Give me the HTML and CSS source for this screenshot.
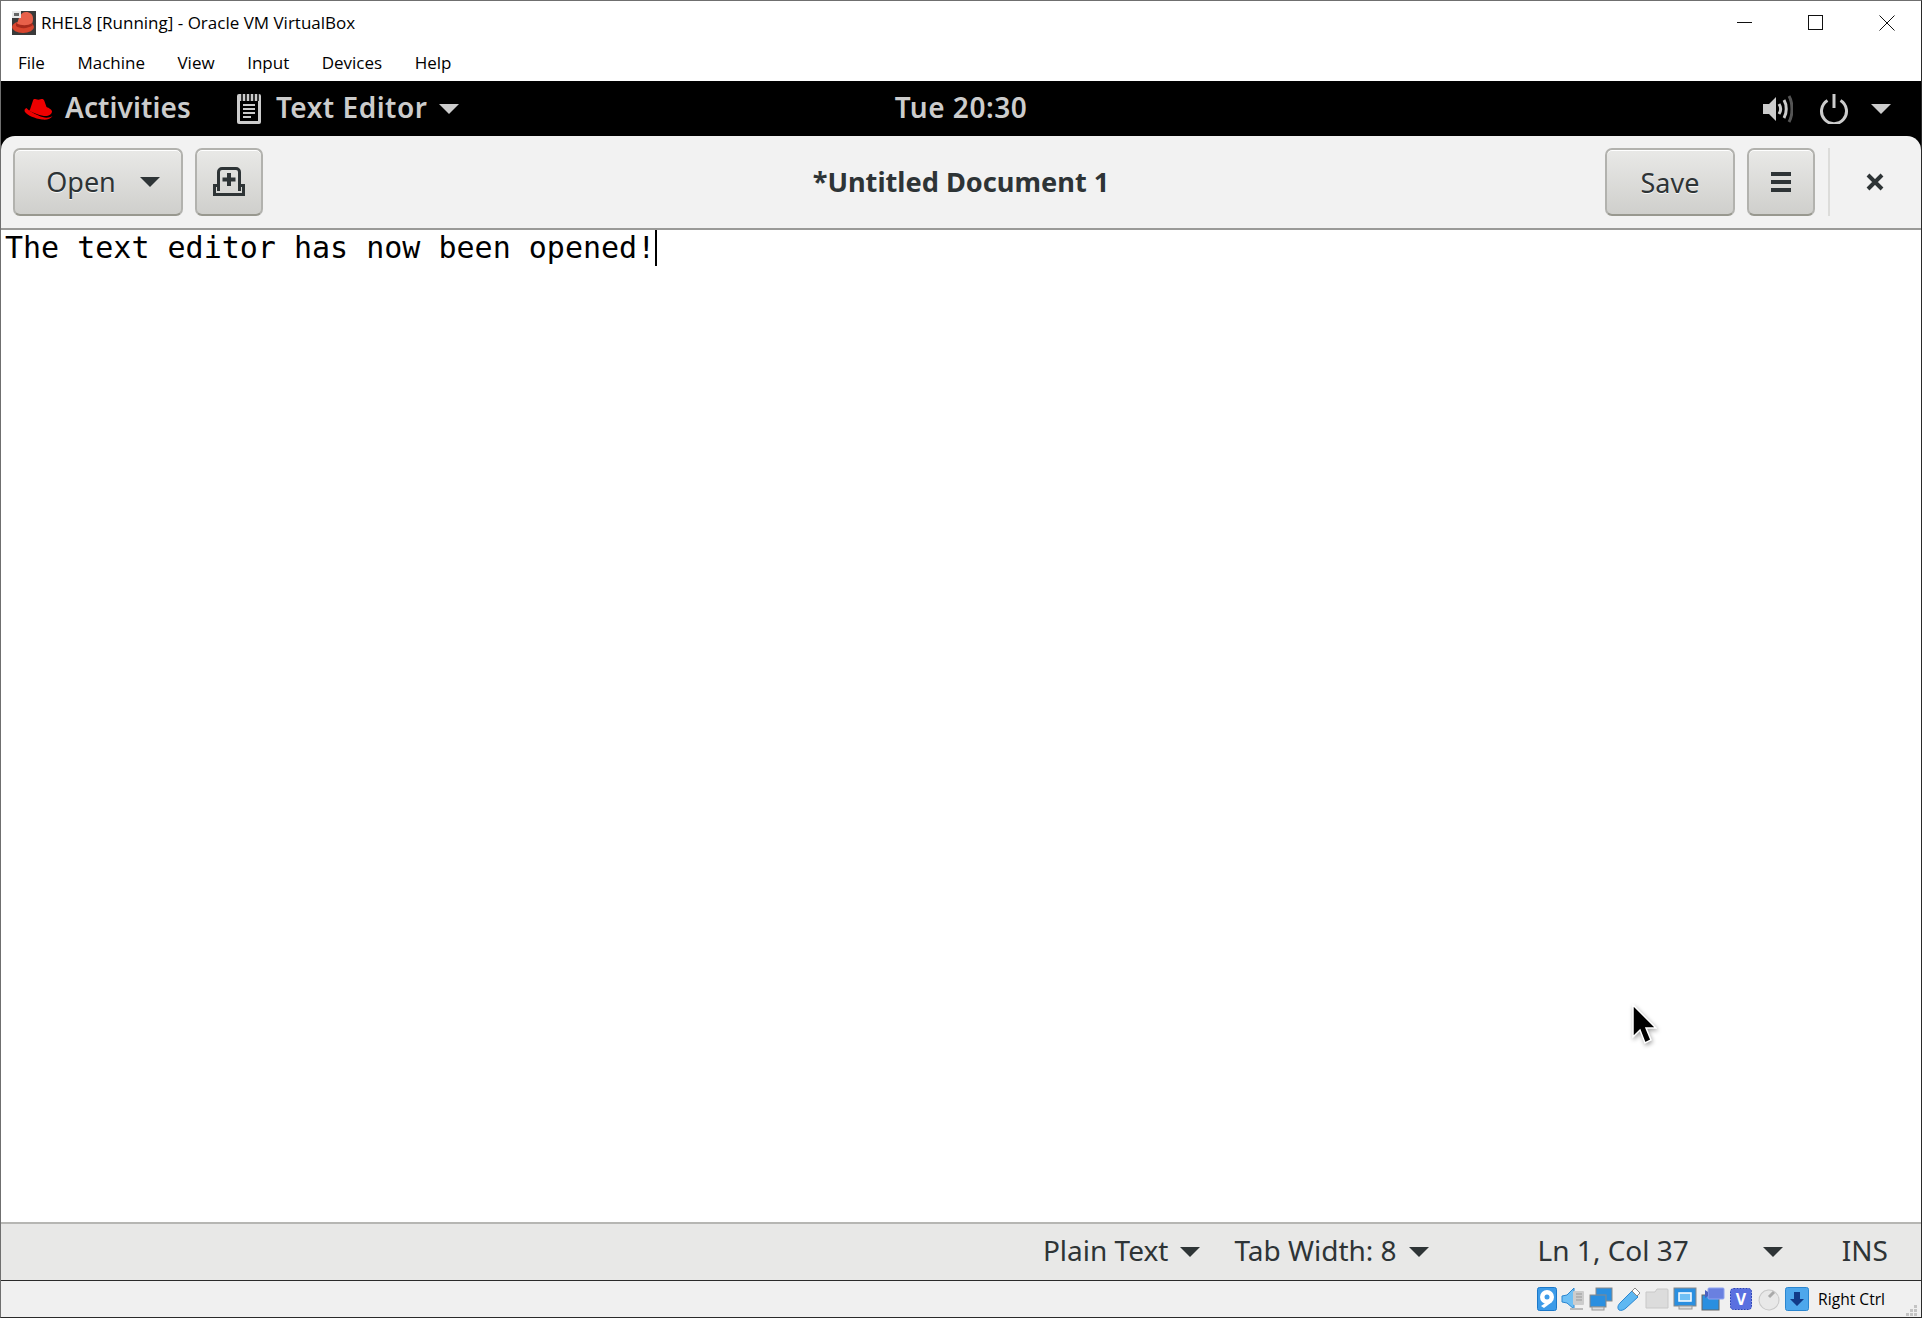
FILE: index.html
```html
<!DOCTYPE html>
<html lang="en">
<head>
<meta charset="utf-8">
<title>RHEL8 [Running] - Oracle VM VirtualBox</title>
<link rel="stylesheet" href="styles.css">
</head>
<body>
<div class="window">
  <div class="titlebar">
    <svg class="app-icon" viewBox="0 0 24 24" width="24" height="24">
      <rect width="24" height="24" fill="#3a3a3a"/>
      <ellipse cx="11" cy="16" rx="11" ry="6" fill="#d8452e"/>
      <path d="M5 14C6 9 8 1 14 1c4 0 7 2 7 7 0 3-1 5-2 6-4 2-10 2-14 0z" fill="#e8604a"/>
      <path d="M4 12c5 3 12 3 16 0l1 2c-5 4-13 4-17 1z" fill="#a82a1c"/>
      <rect width="9" height="7" fill="#e8e8e8"/>
      <rect x="2" y="2" width="5" height="3" fill="#666"/>
    </svg>
    <span class="title-text">RHEL8 [Running] - Oracle VM VirtualBox</span>
    <div class="win-controls">
      <svg viewBox="0 0 16 16" width="16" height="16"><path d="M0 7.500h15" stroke="#111" fill="none"/></svg>
      <svg viewBox="0 0 16 16" width="16" height="16"><rect x=".5" y=".5" width="14" height="14" stroke="#111" fill="none"/></svg>
      <svg viewBox="0 0 16 16" width="16" height="16"><path d="M.5.5l15 15M15.500.5l-15 15" stroke="#111" fill="none"/></svg>
    </div>
  </div>
  <div class="menubar">
    <span class="menu-item">File</span>
    <span class="menu-item">Machine</span>
    <span class="menu-item">View</span>
    <span class="menu-item">Input</span>
    <span class="menu-item">Devices</span>
    <span class="menu-item">Help</span>
  </div>
  <div class="panel">
    <div class="panel-left">
      <svg class="redhat" viewBox="0 0 30 24" width="30" height="24">
        <path d="M6 12.500l3-9c.4-1.300 1.600-1.700 3-1.200 1.400.5 3 .7 4.500 0 1.700-.8 3.200-.4 3.700 1.200l2.300 6.500c2.500 1 5.500 2.700 5.500 4.500 0 2.500-3.500 5-8 4.500C14 17.800 8 15.500 5 13.500z" fill="#e00"/>
        <path d="M2.500 11c-2 1-2.500 2.500-1.500 4 2.500 3.500 10 6.500 17 7.500 4.500.6 9-.5 10.500-3.500-4 2.500-9 2-14-.5C9 16 4.500 13.500 2.500 11z" fill="#e00"/>
      </svg>
      <span class="panel-text activities">Activities</span>
      <svg class="editor-icon" viewBox="0 0 26 32" width="26" height="32">
        <path d="M3 1h20a2 2 0 0 1 2 2v26a2 2 0 0 1-2 2H3a2 2 0 0 1-2-2V3a2 2 0 0 1 2-2z" fill="#ccc"/>
        <rect x="4" y="8" width="18" height="20" fill="#000"/>
        <path d="M6 1v7M10 1v7M14 1v7M18 1v7M22 1v7" stroke="#000" stroke-width="1.500"/>
        <path d="M7 12h12M7 16h12M7 20h12M7 24h8" stroke="#ccc" stroke-width="2"/>
      </svg>
      <span class="panel-text wide">Text Editor</span>
      <span class="caret caret-panel"></span>
    </div>
    <div class="panel-clock panel-text wide">Tue 20:30</div>
    <div class="panel-right">
      <svg viewBox="0 0 30 28" width="30" height="28">
        <path d="M0 9h6l7-7v24l-7-7H0z" fill="#ccc"/>
        <path d="M16 9c2 3 2 7 0 10" stroke="#ccc" stroke-width="3" fill="none"/>
        <path d="M21 5c3 5 3 13 0 18" stroke="#ccc" stroke-width="3" fill="none"/>
        <path d="M26 1c4 7 4 19 0 26" stroke="#555" stroke-width="3" fill="none"/>
      </svg>
      <svg class="power" viewBox="0 0 30 30" width="30" height="30">
        <path d="M8.500 6.500a12.500 12.500 0 1 0 13 0" stroke="#ccc" stroke-width="3" fill="none"/>
        <path d="M15 0v14" stroke="#ccc" stroke-width="3"/>
      </svg>
      <span class="caret caret-panel"></span>
    </div>
  </div>
  <div class="header">
    <div class="header-start">
      <button class="btn btn-open"><span class="btn-label">Open</span><span class="caret caret-dark"></span></button>
      <button class="btn btn-icon">
        <svg viewBox="0 0 32 30" width="32" height="30">
          <path d="M5.500 24V5a3.500 3.500 0 0 1 3.500-3.500h14A3.500 3.500 0 0 1 26.500 5v19" stroke="#2e3436" stroke-width="3" fill="none"/>
          <path d="M1.500 18v9.500h29V18" stroke="#2e3436" stroke-width="3" fill="none"/>
          <path d="M0 18.500h6M26 18.500h6" stroke="#2e3436" stroke-width="3"/>
          <path d="M16 6v13M9.500 12.500h13" stroke="#2e3436" stroke-width="4"/>
        </svg>
      </button>
    </div>
    <div class="doc-title">*Untitled Document 1</div>
    <div class="header-end">
      <button class="btn btn-save">Save</button>
      <button class="btn btn-icon">
        <svg viewBox="0 0 20 20" width="20" height="20"><path d="M0 2h20M0 10h20M0 18h20" stroke="#2e3436" stroke-width="4"/></svg>
      </button>
      <div class="separator"></div>
      <svg class="close" viewBox="0 0 18 18" width="18" height="18"><path d="M2 2l14 14M16 2L2 16" stroke="#2e3436" stroke-width="4"/></svg>
    </div>
  </div>
  <div class="editor">
    <span>The text editor has now been opened!</span><span class="cursor-bar"></span>
    <svg class="pointer" viewBox="0 0 26 42" width="26" height="42">
      <path d="M2 1v32l7-7 5 13 6-3-5-12h10z" fill="#000" stroke="#fff" stroke-width="1.500"/>
    </svg>
  </div>
  <div class="statusbar">
    <span class="status-item">Plain Text</span><span class="caret caret-dark status-caret"></span>
    <span class="status-item tab-width">Tab Width: 8</span><span class="caret caret-dark status-caret"></span>
    <span class="status-item pos">Ln 1, Col 37</span><span class="caret caret-dark pos-caret"></span>
    <span class="status-item ins">INS</span>
  </div>
  <div class="vbox-bar">
    <svg viewBox="0 0 20 24" width="20" height="24"><rect x=".5" y=".5" width="19" height="23" rx="2" fill="#3d9be8" stroke="#1b78c9"/><circle cx="10" cy="10" r="7" fill="#fff"/><circle cx="10" cy="10" r="2.500" fill="#3d9be8"/><path d="M4 19l9-6 2 2-8 6z" fill="#fff"/></svg>
    <svg viewBox="0 0 24 24" width="24" height="24"><path d="M1 9l5-1 7-7v21l-7-6-5-1z" fill="#6fc0f5" stroke="#2a86d0"/><rect x="12" y="4" width="11" height="14" rx="1" fill="#ccc"/><path d="M15 7h6M15 10h6M15 13h6" stroke="#999"/><path d="M9 22h13" stroke="#bbb" stroke-width="2"/></svg>
    <svg viewBox="0 0 24 24" width="24" height="24"><rect x="7" y="1" width="16" height="13" fill="#2a8fe0" stroke="#888"/><rect x="1" y="8" width="16" height="12" fill="#2a8fe0" stroke="#888"/><rect x="3" y="20" width="12" height="3" fill="#ddd" stroke="#999"/></svg>
    <svg viewBox="0 0 24 24" width="24" height="24"><path d="M2 23c-2-2-1-5 1-7L15 4l6 6L9 21c-2 2-5 3-7 2z" fill="#5fb8f2" stroke="#2a86d0"/><path d="M15 4l3-3 5 5-3 3z" fill="#fff" stroke="#888"/></svg>
    <svg viewBox="0 0 24 24" width="24" height="24"><path d="M1 5h9l2-3h10a1 1 0 0 1 1 1v18H1z" fill="#dcdcdc" stroke="#c8c8c8"/></svg>
    <svg viewBox="0 0 24 24" width="24" height="24"><rect x="1" y="1" width="22" height="18" fill="#2a8fe0" stroke="#888"/><rect x="6" y="6" width="12" height="8" fill="#6fc0f5" stroke="#fff" stroke-width="1.500"/><rect x="6" y="19" width="13" height="3" fill="#ddd" stroke="#999"/></svg>
    <svg viewBox="0 0 24 24" width="24" height="24"><rect x="1" y="8" width="17" height="15" fill="#2a8fe0" stroke="#666"/><rect x="7" y="1" width="16" height="11" rx="1" fill="#6a80e0" stroke="#8fa4f0"/><path d="M4 3l3 2v4l-3 2z" fill="#4a60c0"/></svg>
    <svg viewBox="0 0 24 24" width="24" height="24"><rect x="1.500" y="1.500" width="21" height="21" rx="3" fill="#5a70e0" stroke="#2d44b8" stroke-dasharray="2 1"/><text x="12" y="18" class="vt-text">V</text></svg>
    <svg viewBox="0 0 24 24" width="24" height="24"><ellipse cx="12" cy="13" rx="10" ry="10" fill="#e8e8e8" stroke="#c8c8c8" transform="rotate(40 12 13)"/><path d="M12 10l5-5" stroke="#aaa" stroke-width="3"/></svg>
    <svg viewBox="0 0 24 24" width="24" height="24"><rect x=".5" y=".5" width="23" height="23" rx="2" fill="#4ea7ec" stroke="#2a86d0"/><path d="M9 5h6v7h4l-7 7-7-7h4z" fill="#123a88"/></svg>
    <span class="hostkey">Right Ctrl</span>
    <svg class="grip" viewBox="0 0 12 12" width="12" height="12"><path d="M8 0h3v3H8zM4 4h3v3H4zM8 4h3v3H8zM0 8h3v3H0zM4 8h3v3H4zM8 8h3v3H8z" fill="#c4c4c4"/></svg>
  </div>
</div>
</body>
</html>
```
FILE: styles.css
```css
* { box-sizing: border-box; }
html, body { margin: 0; padding: 0; }
body { width: 1922px; height: 1318px; overflow: hidden; background: #fff; }
.window {
  width: 1922px; height: 1318px;
  display: flex; flex-direction: column;
  border: 1px solid #6f6f6f;
  border-right-color: #2a2a2a; border-bottom-color: #2a2a2a;
  background: #fff;
}
.titlebar {
  height: 44px; flex: none;
  display: flex; align-items: center;
  padding-left: 11px;
  font: 17px "Open Sans", sans-serif; color: #000;
}
.app-icon { flex: none; }
.title-text { margin-left: 5px; margin-top: -1px; }
.win-controls { margin-left: auto; display: flex; gap: 55px; padding-right: 26px; }
.menubar {
  height: 34px; margin-bottom: 2px; flex: none;
  display: flex; align-items: center;
  padding-left: 17px; gap: 32.500px;
  font: 17px "Open Sans", sans-serif; color: #000;
}
.panel {
  height: 55px; flex: none;
  background: #000;
  display: flex; align-items: center;
  position: relative;
}
.panel-text { color: #ccc; font: 600 28px/34px "Noto Sans", sans-serif; padding-bottom: 3px; }
.wide { letter-spacing: .5px; }
.panel-left { display: flex; align-items: center; padding-left: 23px; }
.activities { margin-left: 11px; margin-right: 45px; letter-spacing: .1px; }
.editor-icon { margin-right: 14px; }
.caret { display: inline-block; width: 0; height: 0; border-left: 10px solid transparent; border-right: 10px solid transparent; }
.caret-panel { border-top: 10px solid #ccc; }
.caret-dark { border-top: 10px solid #2e3436; }
.panel-left .caret-panel { margin-left: 12px; }
.panel-clock { position: absolute; left: 0; right: 0; text-align: center; }
.panel-right { margin-left: auto; display: flex; align-items: center; padding-right: 30px; }
.power { margin-left: 26px; margin-right: 22px; }
.header {
  height: 94px; flex: none;
  background: #f2f2f2;
  border-radius: 14px 14px 0 0;
  border-bottom: 2px solid #9a9a98;
  display: grid;
  grid-template-columns: 1fr auto 1fr;
  align-items: center;
  box-shadow: 0 -14px 0 #000;
}
.header-start, .header-end { display: flex; align-items: center; }
.header-start { padding-left: 12px; }
.header-end { justify-content: flex-end; }
.btn {
  height: 68px;
  border: 2px solid #b2b2ae;
  border-bottom-color: #98988f;
  border-radius: 7px;
  background: linear-gradient(#e9e9e7, #cfcfcc);
  box-shadow: inset 0 1px 0 #fff;
  color: #2e3436;
  font: 27px "Noto Sans", sans-serif;
  text-shadow: 0 1px 0 rgba(255, 255, 255, .8);
  display: flex; align-items: center; justify-content: center;
  padding: 0;
}
.btn-open { width: 170px; gap: 24px; padding-left: 10px; }
.btn-label { margin-top: -2px; }
.btn-icon { width: 68px; margin-left: 12px; }
.doc-title {
  text-align: center;
  color: #2e3436;
  font: 700 27.200px "Noto Sans", sans-serif;
  margin-top: -2px;
}
.btn-save { width: 130px; }
.separator { width: 2px; height: 68px; background: #dcdcda; margin: 0 36px 0 13px; }
.close { margin-right: 37px; }
.editor {
  flex: 1;
  position: relative;
  background: #fff;
  padding-left: 4px;
  font: 30px/36px "DejaVu Sans Mono", monospace; color: #000;
}
.cursor-bar { display: inline-block; width: 2px; height: 36px; background: #000; vertical-align: top; }
.pointer { position: absolute; left: 1630px; top: 774px; filter: drop-shadow(1px 2px 2px rgba(0, 0, 0, .35)); }
.statusbar {
  height: 59px; flex: none;
  background: #e8e8e7;
  border-top: 2px solid #b6b6b3;
  border-bottom: 1px solid #2a2a2a;
  display: flex; align-items: center; justify-content: flex-end;
  color: #2e3436;
  font: 28px "Noto Sans", sans-serif;
}
.status-item { margin-top: -4px; }
.status-caret { margin-left: 12px; }
.tab-width { margin-left: 34px; }
.pos { margin-left: 109px; }
.pos-caret { margin-left: 74px; }
.ins { margin-left: 59px; margin-right: 33px; }
.vbox-bar {
  height: 36px; flex: none;
  background: #f0f0f0;
  display: flex; align-items: center; justify-content: flex-end;
  gap: 4px;
  padding-right: 3px;
}
.vt-text { fill: #fff; font: 700 16px "Noto Sans", sans-serif; text-anchor: middle; }
.hostkey { font: 15.600px "Open Sans", sans-serif; color: #000; margin-left: 5px; margin-right: 17px; }
.grip { align-self: flex-end; }
```
